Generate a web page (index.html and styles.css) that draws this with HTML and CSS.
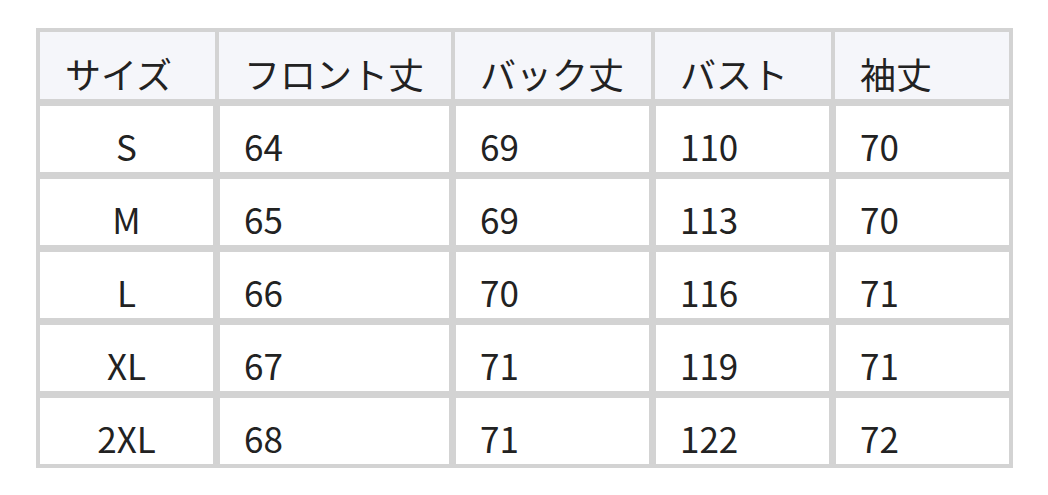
FILE: index.html
```html
<!DOCTYPE html>
<html lang="ja">
<head>
<meta charset="utf-8">
<link rel="stylesheet" href="styles.css">
</head>
<body>
<div class="table">
  <div class="row head">
    <div class="cell">サイズ</div>
    <div class="cell">フロント丈</div>
    <div class="cell">バック丈</div>
    <div class="cell">バスト</div>
    <div class="cell">袖丈</div>
  </div>
  <div class="row body">
    <div class="cell size">S</div><div class="cell">64</div><div class="cell">69</div><div class="cell">110</div><div class="cell">70</div>
  </div>
  <div class="row body">
    <div class="cell size">M</div><div class="cell">65</div><div class="cell">69</div><div class="cell">113</div><div class="cell">70</div>
  </div>
  <div class="row body">
    <div class="cell size">L</div><div class="cell">66</div><div class="cell">70</div><div class="cell">116</div><div class="cell">71</div>
  </div>
  <div class="row body">
    <div class="cell size">XL</div><div class="cell">67</div><div class="cell">71</div><div class="cell">119</div><div class="cell">71</div>
  </div>
  <div class="row body">
    <div class="cell size">2XL</div><div class="cell">68</div><div class="cell">71</div><div class="cell">122</div><div class="cell">72</div>
  </div>
</div>
</body>
</html>
```
FILE: styles.css
```css
html, body {
  margin: 0;
  padding: 0;
  background: #ffffff;
}
body {
  padding: 28px 0 0 36px;
  font-family: "Noto Sans CJK JP", "Noto Sans", sans-serif;
  color: #222222;
}
.table {
  width: 969px;
  background: #d3d3d3;
  padding: 4px;
  display: flex;
  flex-direction: column;
  gap: 7px;
}
.row {
  display: grid;
}
.head {
  grid-template-columns: 175px 232px 196px 176px 174px;
  column-gap: 4px;
  height: 67px;
}
.body {
  grid-template-columns: 173px 229px 193px 173px 173px;
  column-gap: 7px;
  height: 66px;
}
.cell {
  display: flex;
  align-items: flex-end;
  font-size: 35px;
  line-height: normal;
  background: #ffffff;
  white-space: nowrap;
}
.head .cell {
  background: #f5f6fa;
  font-size: 36px;
  padding-left: 25px;
  padding-bottom: 0;
}
.body .cell {
  padding-left: 24px;
  padding-bottom: 1px;
}
.body .size {
  justify-content: center;
  padding-left: 0;
}
```
